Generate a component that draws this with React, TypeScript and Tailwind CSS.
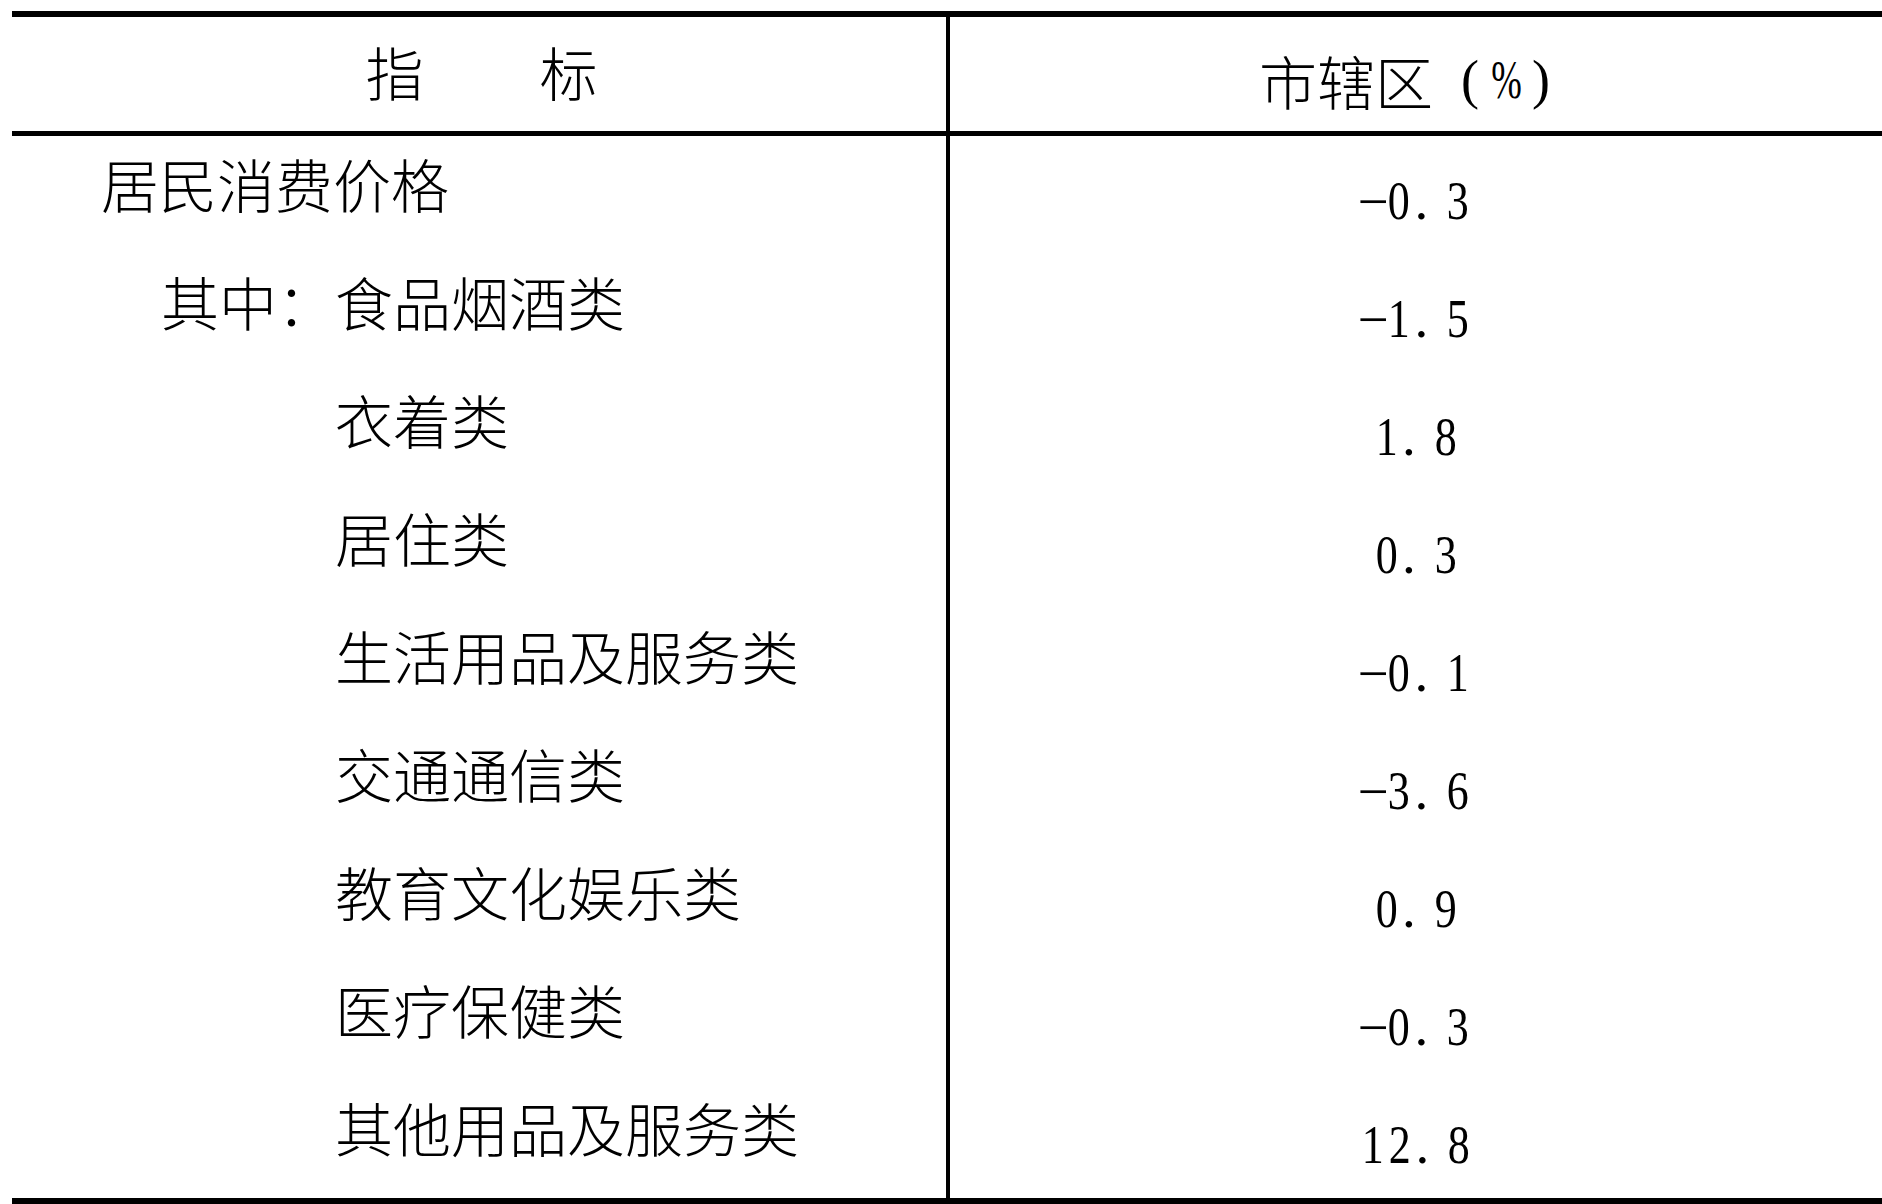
import React from "react";

const rows: { label: string; pl: string; value: string }[] = [
  { label: "居民消费价格", pl: "pl-[89px]", value: "-0.3" },
  { label: "其中：食品烟酒类", pl: "pl-[149px]", value: "-1.5" },
  { label: "衣着类", pl: "pl-[323px]", value: "1.8" },
  { label: "居住类", pl: "pl-[323px]", value: "0.3" },
  { label: "生活用品及服务类", pl: "pl-[323px]", value: "-0.1" },
  { label: "交通通信类", pl: "pl-[323px]", value: "-3.6" },
  { label: "教育文化娱乐类", pl: "pl-[323px]", value: "0.9" },
  { label: "医疗保健类", pl: "pl-[323px]", value: "-0.3" },
  { label: "其他用品及服务类", pl: "pl-[323px]", value: "12.8" },
];

function Num({ v }: { v: string }) {
  return (
    <div className="flex justify-center font-['Liberation_Serif',serif] text-[55px] leading-[54px] text-black">
      {v.split("").map((c, i) => {
        if (c === "-") {
          return (
            <span key={i} className="inline-flex w-[25px] justify-center">
              <span className="inline-block translate-y-[1px]">−</span>
            </span>
          );
        }
        if (c === ".") {
          return (
            <span key={i} className="inline-block w-[32px] pl-[2px] text-left">
              .
            </span>
          );
        }
        return (
          <span key={i} className="inline-flex w-[27px] justify-center">
            <span className="inline-block scale-x-[0.8]">{c}</span>
          </span>
        );
      })}
    </div>
  );
}

export default function App() {
  return (
    <div className="w-[1882px] h-[1204px] bg-white pt-[11px] pl-[12px] overflow-hidden">
      <div className="border-t-[6px] border-b-[6px] border-black">
        {/* Header */}
        <div className="flex h-[114px]">
          <div className="w-[938px] shrink-0 border-r-[4px] border-black flex justify-center pt-[25px] pl-[5px] font-['Noto_Sans_CJK_SC',sans-serif] text-[58px] leading-[58px] font-light text-black">
            指　　标
          </div>
          <div className="flex-1 flex justify-center items-start pt-[34px] pr-[15px] text-black">
            <span className="font-['Noto_Sans_CJK_SC',sans-serif] text-[58px] leading-[58px] font-light">
              市辖区
            </span>
            <span className="w-[19px]" />
            <span className="inline-flex w-[36px] justify-center font-['Liberation_Serif',serif] text-[54px] leading-[58px]">
              (
            </span>
            <span className="inline-flex w-[36px] justify-center font-['Liberation_Serif',serif] text-[54px] leading-[58px]">
              <span className="inline-block scale-x-[0.68]">%</span>
            </span>
            <span className="inline-flex w-[34px] justify-center font-['Liberation_Serif',serif] text-[54px] leading-[58px]">
              )
            </span>
          </div>
        </div>
        <div className="h-[5px] bg-black" />
        {/* Body */}
        {rows.map((r, i) => (
          <div key={i} className="flex h-[118px]">
            <div
              className={`w-[938px] shrink-0 border-r-[4px] border-black pt-[18px] ${r.pl} font-['Noto_Sans_CJK_SC',sans-serif] text-[58px] leading-[58px] font-light text-black whitespace-nowrap`}
            >
              {r.label}
            </div>
            <div className="flex-1 pt-[38px]">
              <Num v={r.value} />
            </div>
          </div>
        ))}
      </div>
    </div>
  );
}
